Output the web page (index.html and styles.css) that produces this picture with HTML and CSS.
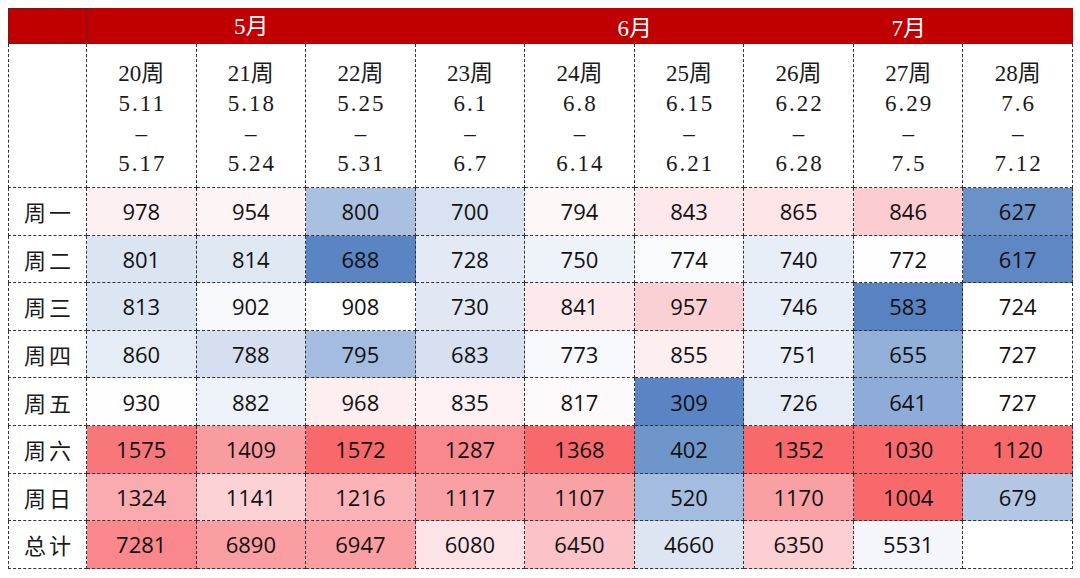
FILE: index.html
```html
<!DOCTYPE html>
<html lang="zh">
<head>
<meta charset="utf-8">
<title>周度数据</title>
<link rel="stylesheet" href="styles.css">
</head>
<body>
<div class="sheet">
  <div class="corner"></div>
  <div class="month m5">5月</div>
  <div class="month m6">6月</div>
  <div class="month m7">7月</div>
  <div class="month m-empty"></div>

  <div class="hcell first"></div>
  <div class="hcell"><span>20周</span><span class="d">5.11</span><span>–</span><span class="d">5.17</span></div>
  <div class="hcell"><span>21周</span><span class="d">5.18</span><span>–</span><span class="d">5.24</span></div>
  <div class="hcell"><span>22周</span><span class="d">5.25</span><span>–</span><span class="d">5.31</span></div>
  <div class="hcell"><span>23周</span><span class="d">6.1</span><span>–</span><span class="d">6.7</span></div>
  <div class="hcell"><span>24周</span><span class="d">6.8</span><span>–</span><span class="d">6.14</span></div>
  <div class="hcell"><span>25周</span><span class="d">6.15</span><span>–</span><span class="d">6.21</span></div>
  <div class="hcell"><span>26周</span><span class="d">6.22</span><span>–</span><span class="d">6.28</span></div>
  <div class="hcell"><span>27周</span><span class="d">6.29</span><span>–</span><span class="d">7.5</span></div>
  <div class="hcell"><span>28周</span><span class="d">7.6</span><span>–</span><span class="d">7.12</span></div>

  <div class="label">周一</div>
  <div class="cell" style="background:#fdf0f2">978</div>
  <div class="cell" style="background:#fdf4f5">954</div>
  <div class="cell" style="background:#a9c0e0">800</div>
  <div class="cell" style="background:#d8e2f0">700</div>
  <div class="cell" style="background:#fdf7f8">794</div>
  <div class="cell" style="background:#fde8eb">843</div>
  <div class="cell" style="background:#fde5e8">865</div>
  <div class="cell" style="background:#fbcdd1">846</div>
  <div class="cell" style="background:#6a92c9">627</div>

  <div class="label">周二</div>
  <div class="cell" style="background:#dbe4f1">801</div>
  <div class="cell" style="background:#dfe7f3">814</div>
  <div class="cell" style="background:#5a84c2">688</div>
  <div class="cell" style="background:#e3eaf5">728</div>
  <div class="cell" style="background:#eef2f9">750</div>
  <div class="cell" style="background:#fafbfd">774</div>
  <div class="cell" style="background:#e8eef7">740</div>
  <div class="cell" style="background:#fefeff">772</div>
  <div class="cell" style="background:#5e87c4">617</div>

  <div class="label">周三</div>
  <div class="cell" style="background:#dce5f2">813</div>
  <div class="cell" style="background:#f7f9fc">902</div>
  <div class="cell" style="background:#ffffff">908</div>
  <div class="cell" style="background:#e1e8f4">730</div>
  <div class="cell" style="background:#fde9ec">841</div>
  <div class="cell" style="background:#fbd0d4">957</div>
  <div class="cell" style="background:#e8eef7">746</div>
  <div class="cell" style="background:#5882c2">583</div>
  <div class="cell" style="background:#ffffff">724</div>

  <div class="label">周四</div>
  <div class="cell" style="background:#e6ecf6">860</div>
  <div class="cell" style="background:#d5dff0">788</div>
  <div class="cell" style="background:#a3bcdf">795</div>
  <div class="cell" style="background:#d6e0f0">683</div>
  <div class="cell" style="background:#f8f9fc">773</div>
  <div class="cell" style="background:#fdeef0">855</div>
  <div class="cell" style="background:#eaeff8">751</div>
  <div class="cell" style="background:#93b0d9">655</div>
  <div class="cell" style="background:#ffffff">727</div>

  <div class="label">周五</div>
  <div class="cell" style="background:#fefefe">930</div>
  <div class="cell" style="background:#eef2f9">882</div>
  <div class="cell" style="background:#fdeef0">968</div>
  <div class="cell" style="background:#fdf1f3">835</div>
  <div class="cell" style="background:#fefafb">817</div>
  <div class="cell" style="background:#5a84c3">309</div>
  <div class="cell" style="background:#e6ecf6">726</div>
  <div class="cell" style="background:#8eacd7">641</div>
  <div class="cell" style="background:#ffffff">727</div>

  <div class="label">周六</div>
  <div class="cell" style="background:#f7777b">1575</div>
  <div class="cell" style="background:#f99ca0">1409</div>
  <div class="cell" style="background:#f8696b">1572</div>
  <div class="cell" style="background:#f8888c">1287</div>
  <div class="cell" style="background:#f8696b">1368</div>
  <div class="cell" style="background:#6f96cb">402</div>
  <div class="cell" style="background:#f8696b">1352</div>
  <div class="cell" style="background:#f8696b">1030</div>
  <div class="cell" style="background:#f8696b">1120</div>

  <div class="label">周日</div>
  <div class="cell" style="background:#faabaf">1324</div>
  <div class="cell" style="background:#fcd2d5">1141</div>
  <div class="cell" style="background:#fbb3b7">1216</div>
  <div class="cell" style="background:#f9a0a4">1117</div>
  <div class="cell" style="background:#f9a2a6">1107</div>
  <div class="cell" style="background:#a3bce0">520</div>
  <div class="cell" style="background:#f9a0a4">1170</div>
  <div class="cell" style="background:#f8696b">1004</div>
  <div class="cell" style="background:#b3c7e5">679</div>

  <div class="label">总计</div>
  <div class="cell" style="background:#f9878b">7281</div>
  <div class="cell" style="background:#fa9ea2">6890</div>
  <div class="cell" style="background:#fa9ea2">6947</div>
  <div class="cell" style="background:#fde3e6">6080</div>
  <div class="cell" style="background:#fbc3c7">6450</div>
  <div class="cell" style="background:#dde5f2">4660</div>
  <div class="cell" style="background:#fccfd3">6350</div>
  <div class="cell" style="background:#f4f6fb">5531</div>
  <div class="cell" style="background:#ffffff"></div>
</div>
</body>
</html>
```

FILE: styles.css
```css
html, body {
  margin: 0;
  padding: 0;
  background: #ffffff;
}

body {
  padding: 8px 0 0 8px;
}

.sheet {
  width: 1065px;
  display: grid;
  grid-template-columns: 79px repeat(9, 1fr);
  grid-template-rows: 36px 144px repeat(8, 47.6px);
  box-sizing: border-box;
}

.corner {
  background: #c00000;
  border: 1px dashed #333;
}

.month {
  background: #c00000;
  color: #ffffff;
  font-family: "Liberation Serif", "Noto Sans CJK SC", serif;
  font-size: 23px;
  display: flex;
  align-items: center;
  justify-content: center;
}

.m5 {
  grid-column: span 3;
  padding-bottom: 5px;
}

.m6 {
  grid-column: span 4;
}

.m7 {
  grid-column: span 1;
}

.m-empty {
  grid-column: span 1;
}

.hcell {
  display: flex;
  flex-direction: column;
  align-items: center;
  justify-content: center;
  font-family: "Liberation Serif", "Noto Sans CJK SC", serif;
  font-size: 23px;
  line-height: 30px;
  color: #1a1a1a;
  border-right: 1px dashed #333;
  border-bottom: 1px dashed #333;
  padding-top: 7px;
}

.hcell .d {
  letter-spacing: 2px;
  padding-left: 2px;
}

.hcell.first {
  border-left: 1px dashed #333;
}

.label {
  display: flex;
  align-items: center;
  justify-content: center;
  font-family: "Noto Sans CJK SC", sans-serif;
  font-size: 22px;
  letter-spacing: 3px;
  padding-left: 3px;
  color: #1a1a1a;
  border-left: 1px dashed #333;
  border-right: 1px dashed #333;
  border-bottom: 1px dashed #333;
}

.cell {
  display: flex;
  align-items: center;
  justify-content: center;
  font-family: "Open Sans", "Noto Sans", sans-serif;
  font-size: 22px;
  color: #111111;
  border-right: 1px dashed #333;
  border-bottom: 1px dashed #333;
}
```
